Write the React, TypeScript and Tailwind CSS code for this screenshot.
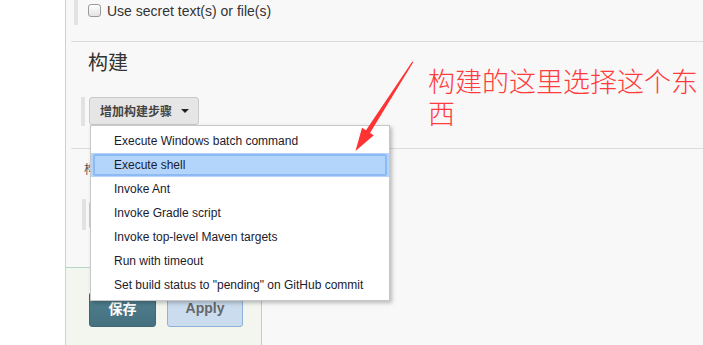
import React from "react";

const items = [
  "Execute Windows batch command",
  "Execute shell",
  "Invoke Ant",
  "Invoke Gradle script",
  "Invoke top-level Maven targets",
  "Run with timeout",
  'Set build status to "pending" on GitHub commit',
];

export default function App() {
  return (
    <div
      className="relative flex w-[703px] h-[345px] overflow-hidden bg-white text-[#333]"
      style={{ fontFamily: '"Liberation Sans", Arial, "Noto Sans CJK SC", sans-serif' }}
    >
      <div className="w-[65px] shrink-0 bg-white" />
      <div className="relative flex flex-1 flex-col border-l border-[#cfcfcf] bg-[#f8f8f8]">
        {/* top checkbox row */}
        <div className="flex h-[25px] pl-[8px]">
          <div className="w-[4px] h-[25px] bg-[#e2e2e2]" />
          <div className="ml-[10px] mt-[3px] flex items-start">
            <div className="mt-[1px] w-[13px] h-[13px] rounded-[3px] border border-[#9a9a9a] bg-gradient-to-b from-[#fdfdfd] to-[#e4e4e4]" />
            <span className="ml-[6px] text-[14px] leading-[16px] text-[#333]">Use secret text(s) or file(s)</span>
          </div>
        </div>
        <div className="mt-[16px] ml-[5px] border-t border-[#dcdcdc]" />
        {/* heading */}
        <div
          className="mt-[6px] pl-[22px] text-[20px] leading-[28px] text-[#333]"
          style={{ fontFamily: '"Noto Sans CJK SC", sans-serif' }}
        >
          构建
        </div>
        {/* add build step */}
        <div className="mt-[21px] flex h-[29px] pl-[15px]">
          <div className="w-[4px] h-[29px] bg-[#e2e2e2]" />
          <div className="ml-[4px] flex h-[28px] w-[110px] items-center rounded-[3px] border border-[#cbcbcb] bg-[#e6e6e6] pl-[10px]">
            <span
              className="text-[12px] font-bold text-[#444]"
              style={{ fontFamily: '"Noto Sans CJK SC", sans-serif' }}
            >
              增加构建步骤
            </span>
            <span className="ml-[9px] h-0 w-0 border-x-[4px] border-t-[4px] border-x-transparent border-t-[#222]" />
          </div>
        </div>
        <div className="mt-[22px] ml-[5px] border-t border-[#dcdcdc]" />
        <div className="mt-[12px] ml-[18px] h-[16px] w-[6px] overflow-hidden">
          <span
            className="block whitespace-nowrap text-[12px] leading-[16px] text-[#555]"
            style={{ fontFamily: '"Noto Sans CJK SC", sans-serif' }}
          >
            构
          </span>
        </div>
        <div className="mt-[22px] flex h-[31px] pl-[16px]">
          <div className="w-[4px] h-[31px] bg-[#e2e2e2]" />
          <div className="ml-[3px] mt-[2px] h-[28px] w-[120px] rounded-[3px] border border-[#cbcbcb] bg-[#e6e6e6]" />
        </div>
        {/* bottom bar */}
        <div className="mt-[37px] flex h-[78px] w-[196px] gap-[11px] border-t border-r border-[#b3d6c2] bg-[#f3f6ee] pl-[23px] pt-[24px]">
          <div className="flex h-[35px] w-[67px] items-center justify-center rounded-[3px] border border-[#3f6675] bg-gradient-to-b from-[#52818f] to-[#44707f] pb-[2px] text-[14px] font-bold text-white"
            style={{ fontFamily: '"Noto Sans CJK SC", sans-serif' }}
          >
            保存
          </div>
          <div className="flex h-[35px] w-[76px] items-center justify-center rounded-[3px] border border-[#8fb2d8] bg-[#cadcee] pb-[2px] text-[14px] font-bold text-[#666]">
            Apply
          </div>
        </div>

        {/* dropdown menu */}
        <div className="absolute left-[24px] top-[125px] w-[300px] border border-[#c8c8c8] bg-white py-[3px] shadow-[2px_2px_4px_rgba(0,0,0,0.25)]">
          {items.map((t, i) =>
            i === 1 ? (
              <div key={t} className="flex h-[24px] items-center bg-[#b4d5fb] px-[2px]">
                <div className="flex h-[22px] w-full items-center rounded-[2px] border-2 border-[#8ebaf3] pl-[19px] text-[12px] text-[#1b1b2e]">
                  {t}
                </div>
              </div>
            ) : (
              <div key={t} className="flex h-[24px] items-center pl-[23px] text-[12px] text-[#1b1b2e]">
                {t}
              </div>
            )
          )}
        </div>
      </div>

      {/* annotation */}
      <svg className="pointer-events-none absolute left-0 top-0" width="703" height="345">
        <polygon
          points="413,61.5 411.8,62.3 366,130.2 362,127.7 355.5,151 373.8,135.3 370,132.9 413.4,62"
          fill="#ff3333"
        />
      </svg>
      <div
        className="absolute left-[428px] top-[65px] w-[274px] text-[27px] leading-[32px] text-[#ff3b3b]"
        style={{ fontFamily: '"Noto Sans CJK SC", sans-serif', fontWeight: 300 }}
      >
        构建的这里选择这个东西
      </div>
    </div>
  );
}
